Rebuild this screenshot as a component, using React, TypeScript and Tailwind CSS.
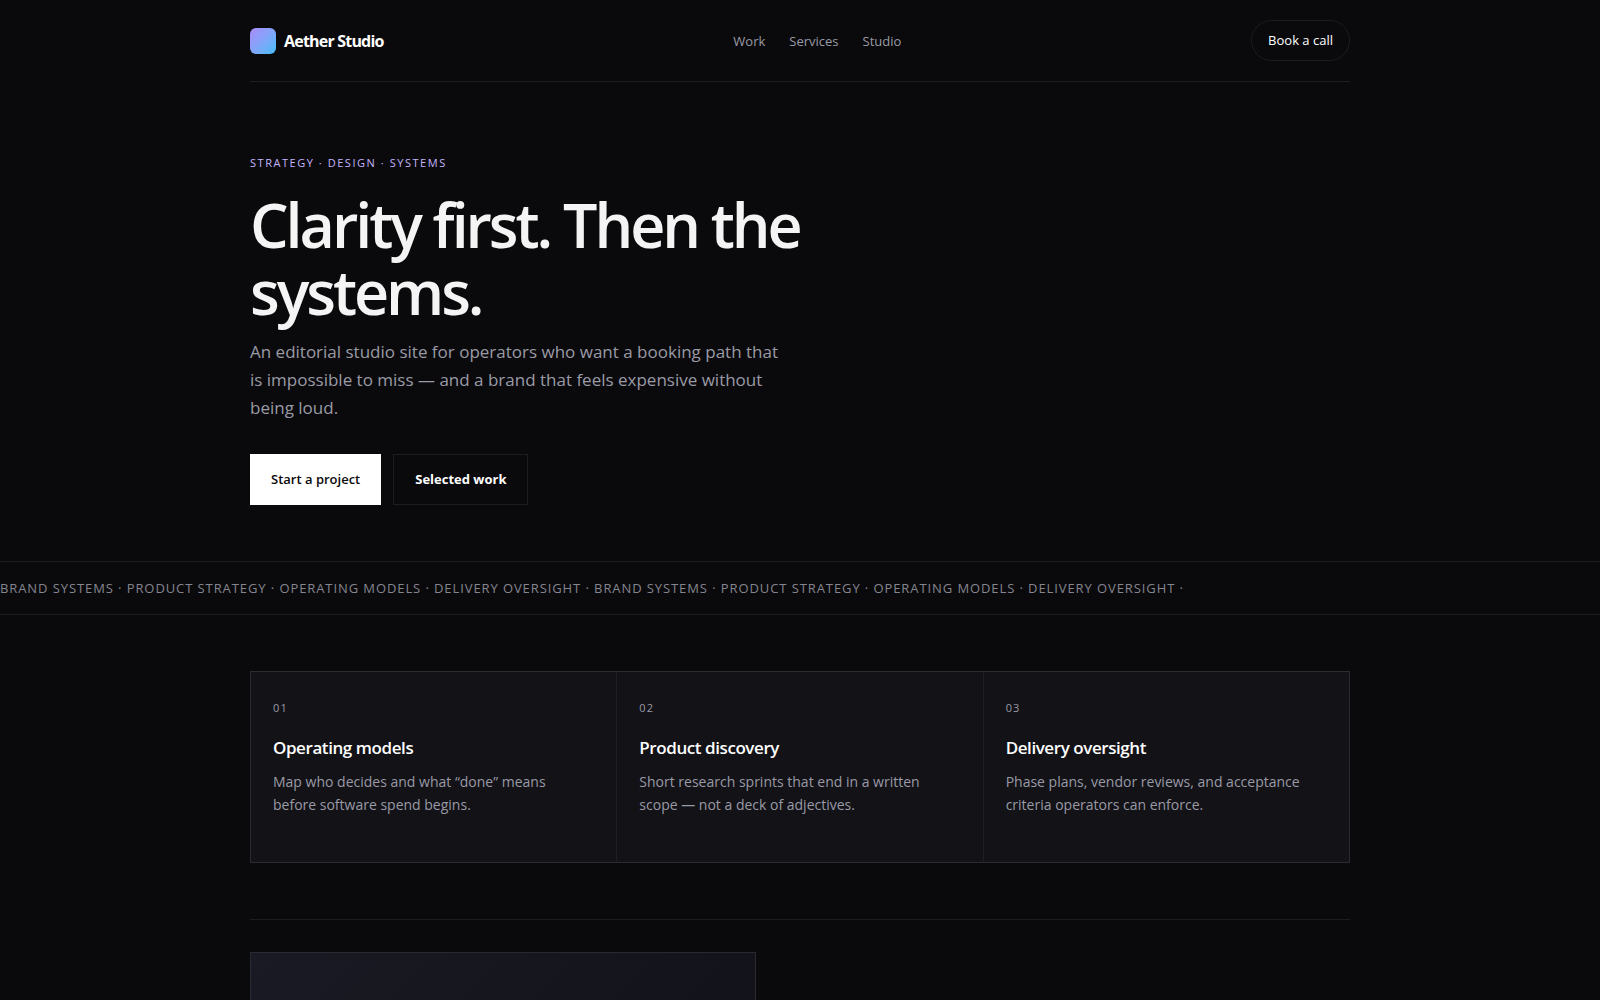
const services = [
  { n: '01', title: 'Operating models', text: 'Map who decides and what “done” means before software spend begins.' },
  { n: '02', title: 'Product discovery', text: 'Short research sprints that end in a written scope — not a deck of adjectives.' },
  { n: '03', title: 'Delivery oversight', text: 'Phase plans, vendor reviews, and acceptance criteria operators can enforce.' },
];

const topics = 'Brand systems · Product strategy · Operating models · Delivery oversight · ';

function Header() {
  return (
    <header className="flex items-center justify-between border-b border-[#1d1d20] py-5">
      <a href="#" className="flex items-center gap-2 text-base leading-6 font-bold tracking-tighter text-white">
        <span className="size-[26px] rounded-md bg-linear-135 from-[#a78bfa] to-[#38bdf8]" />
        Aether Studio
      </a>
      <nav aria-label="Main" className="flex gap-6 text-[13px] leading-5 text-[#9a9aa6]">
        <a href="#work">Work</a>
        <a href="#services">Services</a>
        <a href="#studio">Studio</a>
      </nav>
      <a href="#book" className="rounded-full border border-[#1d1d20] px-4 py-2.5 text-[13px] leading-[19px] text-white">
        Book a call
      </a>
    </header>
  );
}

function Hero() {
  return (
    <section className="pt-[72px] pb-14">
      <p className="text-[11px] leading-[17px] tracking-[0.14em] text-[#c4b5fd] uppercase">
        Strategy · Design · Systems
      </p>
      <h1 className="mt-5 max-w-[600px] text-[61px] leading-[67px] font-semibold tracking-[-0.05em] text-[#f4f4f5]">
        Clarity first. Then the systems.
      </h1>
      <p className="mt-[13px] max-w-[540px] text-[17px] leading-7 text-[#9a9aa6]">
        An editorial studio site for operators who want a booking path that is impossible to miss — and a brand that
        feels expensive without being loud.
      </p>
      <div className="mt-8 flex gap-3 text-[13px] leading-[21px]">
        <button type="button" className="bg-white px-[21px] py-3.5 font-semibold text-[#0a0a0c]">
          Start a project
        </button>
        <button type="button" className="border border-[#1d1d20] px-[21px] py-3.5 font-bold text-white">
          Selected work
        </button>
      </div>
    </section>
  );
}

export default function App() {
  return (
    <div className="min-h-screen overflow-hidden bg-[#0a0a0c] font-['Open_Sans','Noto_Sans',sans-serif]">
      <div className="mx-auto max-w-[1148px] px-6">
        <Header />
        <Hero />
      </div>

      <div className="overflow-hidden border-y border-[#1d1d20] py-4">
        <p className="text-[13px] leading-5 tracking-[0.07em] whitespace-nowrap text-[#85858f] uppercase">
          {topics}
          {topics}
        </p>
      </div>

      <main className="mx-auto max-w-[1148px] px-6">
        <section id="services" className="py-14">
          <div className="grid grid-cols-3 gap-px border border-[#2b2b30] bg-[#1e1e23]">
            {services.map((s) => (
              <article key={s.n} className="bg-[#121217] px-[22px] pt-7 pb-[46px]">
                <p className="text-[11px] leading-4 tracking-widest text-[#9a9aa6]">{s.n}</p>
                <h2 className="mt-5 text-[17px] leading-6 font-semibold tracking-tight text-white">{s.title}</h2>
                <p className="mt-2.5 max-w-[300px] text-sm leading-[23px] text-[#9a9aa6]">{s.text}</p>
              </article>
            ))}
          </div>
        </section>

        <section id="work" className="border-t border-[#1d1d20] py-8">
          <div className="h-80 w-[46%] border border-[#29292f] bg-linear-135 from-[#1a1a24] to-[#0f0f16]" />
        </section>
      </main>
    </div>
  );
}
